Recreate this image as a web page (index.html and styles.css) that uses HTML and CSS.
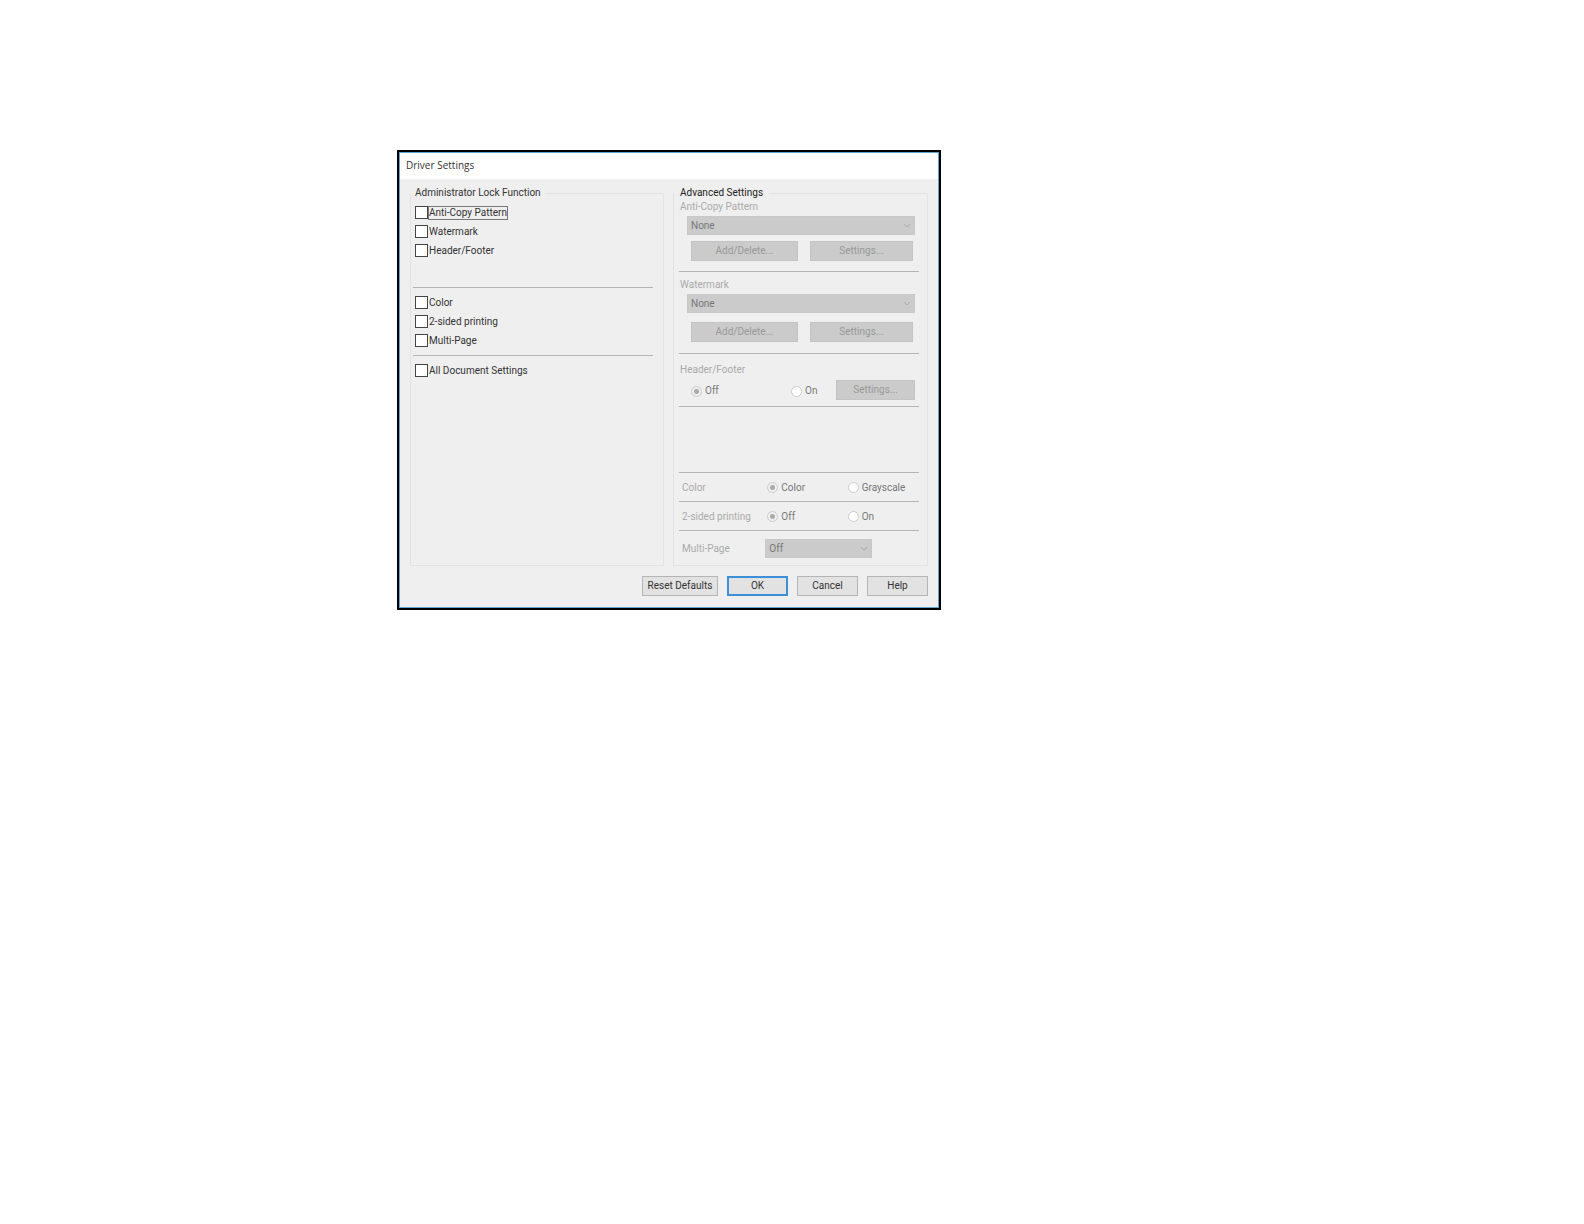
FILE: index.html
```html
<!DOCTYPE html>
<html lang="en">
<head>
    <meta charset="UTF-8">
    <meta name="viewport" content="width=device-width, initial-scale=1.0">
    <title>Driver Settings</title>
    <link rel="stylesheet" href="styles.css">
</head>
<body>

    <main class="dialog">
        <h1 class="title">Driver Settings</h1>

        <form class="content">
            <div class="columns">
                <fieldset>
                    <legend>Administrator Lock Function</legend>
                    <div class="locks locks-top">
                        <label class="check"><input type="checkbox"><span class="focused">Anti-Copy Pattern</span></label>
                        <label class="check"><input type="checkbox"><span>Watermark</span></label>
                        <label class="check"><input type="checkbox"><span>Header/Footer</span></label>
                    </div>
                    <hr>
                    <div class="locks">
                        <label class="check"><input type="checkbox"><span>Color</span></label>
                        <label class="check"><input type="checkbox"><span>2-sided printing</span></label>
                        <label class="check"><input type="checkbox"><span>Multi-Page</span></label>
                    </div>
                    <hr>
                    <div class="locks">
                        <label class="check"><input type="checkbox"><span>All Document Settings</span></label>
                    </div>
                </fieldset>

                <fieldset class="advanced">
                    <legend>Advanced Settings</legend>
                    <section class="pattern">
                        <label class="name" for="pattern">Anti-Copy Pattern</label>
                        <div class="dropdown">
                            <select id="pattern" disabled><option>None</option></select>
                            <svg viewBox="0 0 8 5"><path d="M1 1l3 3 3-3"/></svg>
                        </div>
                        <div class="pair">
                            <button type="button" disabled>Add/Delete...</button>
                            <button type="button" disabled>Settings...</button>
                        </div>
                    </section>
                    <hr>
                    <section class="watermark">
                        <label class="name" for="watermark">Watermark</label>
                        <div class="dropdown">
                            <select id="watermark" disabled><option>None</option></select>
                            <svg viewBox="0 0 8 5"><path d="M1 1l3 3 3-3"/></svg>
                        </div>
                        <div class="pair">
                            <button type="button" disabled>Add/Delete...</button>
                            <button type="button" disabled>Settings...</button>
                        </div>
                    </section>
                    <hr>
                    <section class="header-footer">
                        <span class="name">Header/Footer</span>
                        <div class="switch">
                            <label class="radio"><input type="radio" name="hf" checked disabled>Off</label>
                            <label class="radio"><input type="radio" name="hf" disabled>On</label>
                            <button type="button" disabled>Settings...</button>
                        </div>
                    </section>
                    <hr>
                    <div class="spacer"></div>
                    <hr>
                    <div class="row">
                        <span class="name">Color</span>
                        <label class="radio"><input type="radio" name="color" checked disabled>Color</label>
                        <label class="radio"><input type="radio" name="color" disabled>Grayscale</label>
                    </div>
                    <hr>
                    <div class="row">
                        <span class="name">2-sided printing</span>
                        <label class="radio"><input type="radio" name="sides" checked disabled>Off</label>
                        <label class="radio"><input type="radio" name="sides" disabled>On</label>
                    </div>
                    <hr>
                    <div class="row row-last">
                        <label class="name" for="multipage">Multi-Page</label>
                        <div class="dropdown">
                            <select id="multipage" disabled><option>Off</option></select>
                            <svg viewBox="0 0 8 5"><path d="M1 1l3 3 3-3"/></svg>
                        </div>
                    </div>
                </fieldset>
            </div>

            <div class="actions">
                <button type="button" class="wide">Reset Defaults</button>
                <button type="button" class="default">OK</button>
                <button type="button">Cancel</button>
                <button type="button">Help</button>
            </div>
        </form>
    </main>

</body>
</html>
```
FILE: styles.css
```css
* {
    box-sizing: border-box;
}
body {
    margin: 0;
    padding: 150px 20px 20px 397px;
    background-color: #fff;
    color: #333;
    font-family: Roboto, "Noto Sans", sans-serif;
    font-size: 10px;
    line-height: 14px;
}
.dialog {
    max-width: 544px;
    border: 2px solid #000;
    background-color: #efefef;
}
.title {
    margin: 0;
    padding: 5px 6px 7px;
    border: 1px solid #5fa3d6;
    border-bottom: 0;
    background-color: #fff;
    font-family: "Open Sans", "Noto Sans", sans-serif;
    font-size: 10px;
    font-weight: normal;
}
.content {
    padding: 7px 10px 11px;
    border: 1px solid #5fa3d6;
    border-top: 0;
}
.columns {
    display: grid;
    grid-template-columns: 1fr 1fr;
    gap: 10px;
}
fieldset {
    min-width: 0;
    margin: 0;
    padding: 0;
    border: 1px solid #e3e3e3;
}
legend {
    padding: 0 4px;
}
hr {
    height: 1px;
    margin: 0 10px 1px 2px;
    border: 0;
    background-color: #b4b4b4;
}
.locks {
    padding: 4px 4px 5px;
}
.locks-top {
    padding-top: 3px;
    padding-bottom: 27px;
}
.check {
    display: flex;
    align-items: center;
    height: 19px;
}
.check input {
    appearance: none;
    width: 13px;
    height: 13px;
    margin: 0 1px 0 0;
    border: 1px solid #444;
    background-color: #fff;
}
.check .focused {
    height: 12px;
    line-height: 12px;
    outline: 1px solid #777;
}
button,
select {
    font: inherit;
    color: #333;
}
button {
    height: 20px;
    padding: 0;
    border: 1px solid #b5b5b5;
    background-color: #e2e2e2;
    text-align: center;
}
button:disabled {
    border-color: #c4c4c4;
    background-color: #cbcbcb;
    color: #999;
}
.advanced {
    margin-left: -1px;
}
.advanced legend {
    padding: 0 6px;
    color: #222;
}
.advanced hr {
    margin: 0 8px 1px 5px;
}
.name {
    display: block;
    color: #aaa;
}
.pattern,
.watermark,
.header-footer {
    padding: 0 12px 10px 6px;
}
.watermark {
    padding-top: 5px;
    padding-bottom: 11px;
}
.header-footer {
    padding-top: 8px;
    padding-bottom: 6px;
}
.dropdown {
    position: relative;
    height: 19px;
    margin: 2px 0 0 7px;
}
.dropdown select {
    appearance: none;
    display: block;
    width: 100%;
    height: 100%;
    padding: 0 3px;
    border: 1px solid #c8c8c8;
    border-radius: 0;
    background-color: #cbcbcb;
    color: #777;
    opacity: 1;
}
.dropdown svg {
    position: absolute;
    top: 7px;
    right: 4px;
    width: 8px;
    height: 5px;
    fill: none;
    stroke: #aaa;
}
.pair {
    display: grid;
    grid-template-columns: 107fr 103fr;
    gap: 12px;
    margin: 6px 2px 0 11px;
}
.watermark .pair {
    margin-top: 9px;
}
.radio {
    display: flex;
    align-items: center;
    color: #777;
}
.radio input {
    appearance: none;
    width: 11px;
    height: 11px;
    margin: 0 3px 0 0;
    border: 1px solid #ccc;
    border-radius: 50%;
    background-color: #fff;
}
.radio input:checked {
    background: radial-gradient(circle, #aaa 0 2px, #efefef 3px);
}
.switch {
    display: grid;
    grid-template-columns: 100fr 45fr 79fr;
    margin: 3px 0 0 11px;
}
.switch .radio {
    padding-top: 2px;
}
.spacer {
    height: 64px;
}
.row {
    display: grid;
    grid-template-columns: 85fr 80fr 79fr;
    align-items: center;
    height: 27px;
    padding: 0 0 0 8px;
}
.row-last {
    grid-template-columns: 83fr 106fr 55fr;
    height: 33px;
}
.row-last .dropdown {
    margin: 0;
}
.actions {
    display: flex;
    justify-content: flex-end;
    gap: 9px;
    margin-top: 10px;
}
.actions button {
    width: 61px;
}
.actions .wide {
    width: 76px;
}
.actions .default {
    border: 2px solid #3c8fd8;
}
```
